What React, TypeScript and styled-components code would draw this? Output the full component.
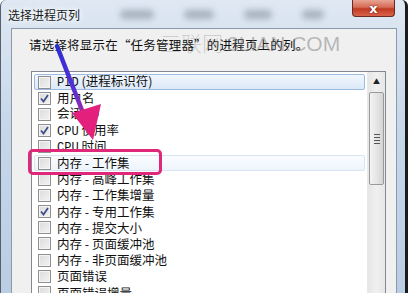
import * as React from 'react';
import styled, { createGlobalStyle } from 'styled-components';

const GlobalStyle = createGlobalStyle`
  body {
    margin: 0;
    background: #fff;
    overflow: hidden;
    font-family: 'Noto Sans CJK SC', 'DejaVu Sans', sans-serif;
  }
`;

const Page = styled.div`
  width: 414px;
  height: 293px;
  display: flex;
  overflow: hidden;
`;

const Frame = styled.div`
  position: relative;
  width: 408px;
  height: 293px;
  flex-shrink: 0;
  display: flex;
  flex-direction: column;
  background: linear-gradient(180deg, #dfe8f3 0%, #c8d8ea 40%, #b9cde3 100%);
  border-left: 1px solid #56606c;
  border-right: 3px solid #1b1b1b;
  border-radius: 6px 6px 0 0;
  box-sizing: border-box;
`;

const TitleBar = styled.div`
  position: relative;
  height: 28px;
  display: flex;
  align-items: center;
  padding-left: 7px;
  flex-shrink: 0;
`;

const Smudge = styled.div<{ $w: number }>`
  width: ${(p) => p.$w}px;
  height: 9px;
  margin-left: 30px;
  border-radius: 6px;
  background: rgba(70, 80, 95, 0.35);
  filter: blur(3px);
`;

const TitleText = styled.span`
  font-size: 12px;
  color: #1a1a1a;
  margin-right: 10px;
  text-shadow: 0 0 6px #fff, 0 0 6px #fff;
`;

const CloseButton = styled.div`
  position: absolute;
  top: 0;
  right: 10px;
  width: 43px;
  height: 17px;
  border: 1px solid #6b2a22;
  border-top: none;
  border-radius: 0 0 4px 4px;
  background: linear-gradient(180deg, #e8a493 0%, #d66b55 45%, #c13a22 55%, #d9624a 100%);
  display: flex;
  align-items: center;
  justify-content: center;
  color: #fff;
  font-family: 'DejaVu Sans', sans-serif;
  font-weight: bold;
  font-size: 13px;
  text-shadow: 0 0 2px #5a1010;
  box-sizing: border-box;
`;

const Client = styled.div`
  position: relative;
  flex: 1;
  margin: 0 8px 0 10px;
  background: #f0f0f0;
  border: 1px solid #8a99ab;
  border-bottom: none;
  padding: 7px 10px 0 17px;
  display: flex;
  flex-direction: column;
`;

const Prompt = styled.div`
  font-size: 12.5px;
  color: #111;
  line-height: 17px;
  height: 17px;
  letter-spacing: 0.2px;
`;

const Watermark = styled.div`
  position: absolute;
  left: 148px;
  top: 1px;
  white-space: nowrap;
  font-family: 'Liberation Sans', sans-serif;
  font-size: 21px;
  line-height: 24px;
  color: rgba(110, 110, 110, 0.45);
  pointer-events: none;
`;

const WatermarkCjk = styled.span`
  font-family: 'Noto Sans CJK SC', sans-serif;
  font-weight: 300;
  color: rgba(120, 120, 120, 0.3);
  margin-right: 4px;
`;

const ListBox = styled.div`
  margin-top: 18px;
  margin-left: 2px;
  flex: 1;
  display: flex;
  background: #fff;
  border: 1px solid #828790;
  border-bottom: none;
`;

const Rows = styled.div`
  flex: 1;
  padding: 2px 2px 0 2px;
  display: flex;
  flex-direction: column;
`;

const Row = styled.div<{ $sel?: 'focus' | 'hover' }>`
  height: 16.2px;
  flex-shrink: 0;
  display: flex;
  align-items: center;
  padding-left: 3px;
  border-radius: 2px;
  box-sizing: border-box;
  font-size: 12.5px;
  color: #111;
  border: 1px solid
    ${(p) => (p.$sel === 'focus' ? '#9cbbe0' : p.$sel === 'hover' ? '#d6e4f3' : 'transparent')};
  background: ${(p) =>
    p.$sel === 'focus'
      ? 'linear-gradient(180deg, #f0f6fd 0%, #dde9f8 100%)'
      : p.$sel === 'hover'
        ? 'linear-gradient(180deg, #fafcff 0%, #eef4fb 100%)'
        : 'transparent'};
`;

const Box = styled.span`
  width: 11px;
  height: 11px;
  border: 1px solid #8f8f8f;
  background: linear-gradient(135deg, #dcdcdc 0%, #f2f2f2 100%);
  box-shadow: inset 0 0 0 1px #f4f4f4;
  margin-right: 6px;
  display: flex;
  align-items: center;
  justify-content: center;
  flex-shrink: 0;
`;

const Label = styled.span`
  line-height: 16px;
  white-space: nowrap;
`;

const Mono = styled.span`
  font-family: 'Liberation Mono', 'DejaVu Sans Mono', monospace;
  font-size: 12px;
`;

const ScrollBar = styled.div`
  width: 17px;
  display: flex;
  flex-direction: column;
  background: linear-gradient(90deg, #e6e6e6 0%, #f0f0f0 50%, #e6e6e6 100%);
  border-left: 1px solid #e8e8e8;
`;

const ArrowButton = styled.div`
  height: 17px;
  display: flex;
  align-items: center;
  justify-content: center;
  font-size: 7px;
  color: #222;
`;

const Thumb = styled.div`
  margin: 3px 1px 0 1px;
  height: 91px;
  border: 1px solid #9a9a9a;
  border-radius: 2px;
  background: linear-gradient(90deg, #f3f3f3 0%, #e6e6e6 50%, #d4d4d4 100%);
  display: flex;
  flex-direction: column;
  align-items: center;
  justify-content: center;
  gap: 2px;
`;

const Grip = styled.span`
  width: 6px;
  height: 1px;
  background: #555;
`;

const Highlight = styled.div`
  position: absolute;
  left: 16px;
  top: 120px;
  width: 128px;
  height: 20px;
  border: 3px solid #e0287a;
  border-radius: 5px;
  pointer-events: none;
`;

const ArrowLayer = styled.svg`
  position: absolute;
  left: 0;
  top: 0;
  pointer-events: none;
`;

function Check({ on }: { on?: boolean }) {
  return (
    <Box>
      {on && (
        <svg width="9" height="9" viewBox="0 0 9 9">
          <path d="M1 4.5 L3.5 7.5 L8 1" stroke="#3d4f86" strokeWidth="1.8" fill="none" />
        </svg>
      )}
    </Box>
  );
}

const items: Array<{ label: React.ReactNode; on?: boolean; sel?: 'focus' | 'hover' }> = [
  { label: <><Mono>PID</Mono> (进程标识符)</>, sel: 'focus' },
  { label: '用户名', on: true },
  { label: <>会话 <Mono>ID</Mono></> },
  { label: <><Mono>CPU</Mono> 使用率</>, on: true },
  { label: <><Mono>CPU</Mono> 时间</> },
  { label: '内存 - 工作集', sel: 'hover' },
  { label: '内存 - 高峰工作集' },
  { label: '内存 - 工作集增量' },
  { label: '内存 - 专用工作集', on: true },
  { label: '内存 - 提交大小' },
  { label: '内存 - 页面缓冲池' },
  { label: '内存 - 非页面缓冲池' },
  { label: '页面错误' },
  { label: '页面错误增量' },
  { label: 'USER 对象' },
];

export default function App() {
  return (
    <Page>
      <GlobalStyle />
      <Frame>
        <TitleBar>
          <TitleText>选择进程页列</TitleText>
          <Smudge $w={34} />
          <Smudge $w={30} />
          <Smudge $w={28} />
          <Smudge $w={22} />
          <CloseButton>x</CloseButton>
        </TitleBar>
        <Client>
          <Watermark>
            <WatermarkCjk>三联网</WatermarkCjk>3LIAN.COM
          </Watermark>
          <Prompt>请选择将显示在“任务管理器”的进程页上的列。</Prompt>
          <ListBox>
            <Rows>
              {items.map((it, i) => (
                <Row key={'row' + i} $sel={it.sel}>
                  <Check on={it.on} />
                  <Label>{it.label}</Label>
                </Row>
              ))}
            </Rows>
            <ScrollBar>
              <ArrowButton>▲</ArrowButton>
              <Thumb>
                <Grip />
                <Grip />
                <Grip />
                <Grip />
              </Thumb>
            </ScrollBar>
          </ListBox>
          <Highlight />
        </Client>
        <ArrowLayer width="408" height="293">
          <defs>
            <linearGradient id="shaft" x1="57" y1="45" x2="90" y2="135" gradientUnits="userSpaceOnUse">
              <stop offset="0" stopColor="#2a2fd0" />
              <stop offset="0.5" stopColor="#5a30d8" />
              <stop offset="1" stopColor="#e0207a" />
            </linearGradient>
          </defs>
          <path d="M56 46 L84 118" stroke="url(#shaft)" strokeWidth="4.5" strokeLinecap="round" fill="none" />
          <path d="M71 113 L100 104 L92 140 Z" fill="#e3207c" />
        </ArrowLayer>
      </Frame>
    </Page>
  );
}
